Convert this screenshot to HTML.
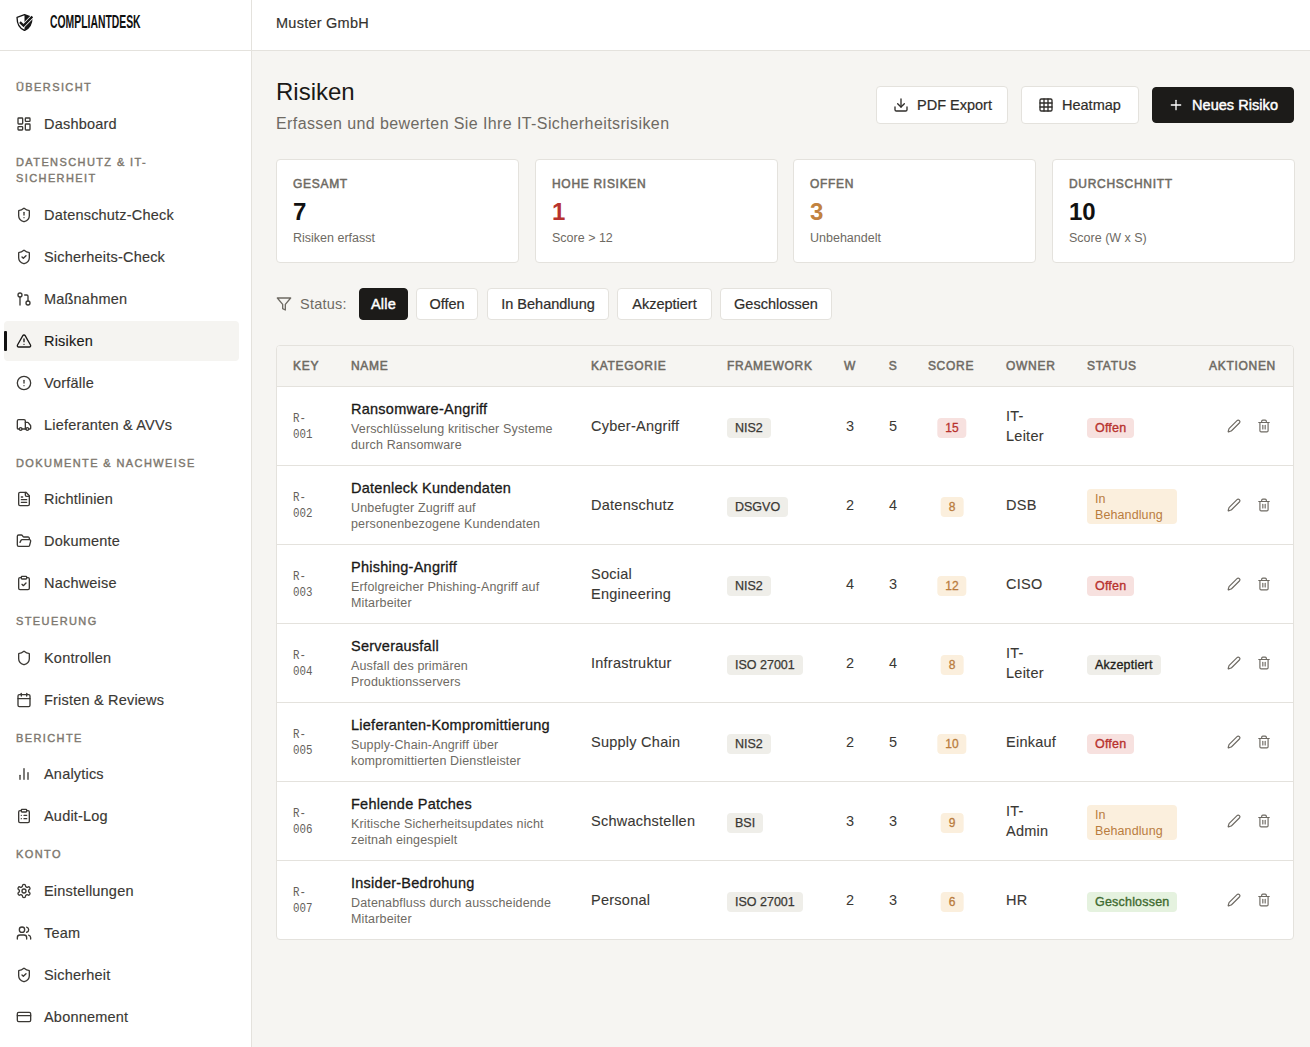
<!DOCTYPE html>
<html><head><meta charset="utf-8">
<style>
*{box-sizing:border-box;margin:0;padding:0}
html,body{width:1310px;height:1047px;overflow:hidden;background:#f6f5f2;font-family:"Liberation Sans",sans-serif;color:#1d1c1a}
svg{display:block}
.side{position:absolute;left:0;top:0;width:252px;height:1047px;background:#fff;border-right:1px solid #e4e2dd}
.logo{position:absolute;left:0;top:0;width:251px;height:51px;border-bottom:1px solid #e4e2dd}
.logo svg{position:absolute;left:16px;top:14px}
.logo .brand{position:absolute;left:50px;top:12px;font-weight:bold;font-size:18px;letter-spacing:0;transform-origin:0 0;transform:scaleX(0.577);color:#111}
.sec{position:absolute;left:16px;font-size:11px;letter-spacing:1.4px;color:#7d776e;font-weight:normal;-webkit-text-stroke:0.4px currentColor;line-height:16px;text-transform:uppercase}
.nav{position:absolute;left:4px;width:235px;height:40px;border-radius:4px;font-size:14.5px;color:#3a3834;-webkit-text-stroke:0.15px currentColor}
.nav svg{position:absolute;left:12px;top:12px}
.nav span{position:absolute;left:40px;top:11px;line-height:18px;letter-spacing:0.2px;white-space:nowrap}
.nav.act{background:#f5f4f1;color:#1a1917}
.nav.act:before{content:"";position:absolute;left:0;top:10px;width:3px;height:20px;background:#111;border-radius:1px}
.top{position:absolute;left:252px;top:0;width:1058px;height:51px;background:#fff;border-bottom:1px solid #e4e2dd}
.top span{position:absolute;left:24px;top:15px;font-size:14.5px;color:#34322e;letter-spacing:0.25px;-webkit-text-stroke:0.15px currentColor}
.main{position:absolute;left:0;top:0;width:1310px;height:1047px}
.ttl{position:absolute;left:276px;top:78px;font-size:24px;line-height:28px;color:#1a1917}
.sub{position:absolute;left:276px;top:114px;font-size:16px;letter-spacing:0.4px;line-height:20px;color:#6e6a63}
.btn{position:absolute;top:86px;height:38px;background:#fff;border:1px solid #e4e2dd;border-radius:4px;font-size:14.5px;-webkit-text-stroke:0.2px currentColor;color:#2f2d2a}
.btn svg{position:absolute;left:16px;top:10px}
.btn span{position:absolute;left:40px;top:9px;line-height:18px}
.btn.dark{top:87px;height:36px;background:#1c1b19;border-color:#1c1b19;color:#fff;-webkit-text-stroke:0.45px #fff;letter-spacing:0.05px}
.btn.dark span{left:39px;top:8px}.btn.dark svg{left:15px;top:9px}
.card{position:absolute;top:159px;width:243px;height:104px;background:#fff;border:1px solid #e4e2dd;border-radius:4px}
.cl{position:absolute;left:16px;top:16px;font-size:12px;line-height:16px;font-weight:normal;-webkit-text-stroke:0.5px currentColor;letter-spacing:0.7px;color:#6e6a63;text-transform:uppercase}
.cv{position:absolute;left:16px;top:38px;font-size:24px;line-height:28px;font-weight:bold;color:#111}
.cv.red{color:#b8322e}.cv.orange{color:#c2823f}
.cs{position:absolute;left:16px;top:70px;font-size:12.5px;line-height:16px;color:#6e6a63}
.flt{position:absolute;left:276px;top:288px;height:32px;font-size:14.5px;color:#6e6a63}
.flt svg{position:absolute;left:0;top:8px}
.flt span{position:absolute;left:24px;top:7px;line-height:18px;white-space:nowrap;letter-spacing:0.25px}
.fb{position:absolute;top:288px;height:32px;background:#fff;border:1px solid #e4e2dd;border-radius:4px;font-size:14.5px;-webkit-text-stroke:0.2px currentColor;line-height:30px;text-align:center;color:#2f2d2a;white-space:nowrap}
.fb.on{background:#1c1b19;border-color:#1c1b19;color:#fff;-webkit-text-stroke:0.45px #fff;letter-spacing:0.2px}
.tbl{position:absolute;left:276px;top:345px;width:1018px;height:595px;background:#fff;border:1px solid #e4e2dd;border-radius:4px;overflow:hidden}
.th{position:absolute;left:0;top:0;width:1016px;height:40px;background:#f6f5f2}
.h{position:absolute;top:12px;font-size:12px;line-height:16px;font-weight:normal;-webkit-text-stroke:0.5px currentColor;letter-spacing:0.7px;color:#6e6a63;text-transform:uppercase;white-space:nowrap}
.h.c{width:100px;text-align:center}
.h.r{width:100px;text-align:right}
.tr{position:absolute;left:0;width:1016px;height:79px;border-top:1px solid #e4e2dd}
.k{position:absolute;left:16px;top:24px;font-family:"Liberation Mono",monospace;font-size:12px;line-height:16px;color:#64605a;transform-origin:0 0;transform:scaleX(0.9)}
.nm{position:absolute;left:74px;top:12px;width:230px}
.nm b{display:block;font-size:14.5px;line-height:20px;font-weight:normal;-webkit-text-stroke:0.3px #1a1917;letter-spacing:0.25px;color:#1a1917}
.nm i{display:block;margin-top:2px;font-style:normal;font-size:12.5px;letter-spacing:0.15px;line-height:16px;color:#6e6a63}
.cat{position:absolute;left:314px;top:29px;font-size:14.5px;line-height:20px;color:#3a3834;letter-spacing:0.25px;-webkit-text-stroke:0.1px currentColor}
.cat.two{top:19px}
.fw{position:absolute;left:450px;top:31px;height:20px;padding:0 8px;background:#efeee9;border-radius:4px;font-size:12.5px;line-height:20px;-webkit-text-stroke:0.25px currentColor;letter-spacing:0;color:#3a3834}
.num{position:absolute;top:29px;width:40px;text-align:center;font-size:14.5px;line-height:20px;color:#3a3834}
.sc{position:absolute;left:675px;top:31px;height:20px;padding:0 8px;border-radius:4px;font-size:12px;line-height:20px;-webkit-text-stroke:0.3px currentColor;transform:translateX(-50%)}
.bred{background:#f7e1df;color:#b8322e}
.borg{background:#fbefdd;color:#b97c3d}
.bgry{background:#efeee9;color:#1f1e1b}
.bgrn{background:#e5f2df;color:#3f6b30}
.own{position:absolute;left:729px;top:29px;font-size:14.5px;line-height:20px;color:#3a3834;letter-spacing:0.25px;-webkit-text-stroke:0.1px currentColor}
.own.two{top:19px}
.st{position:absolute;left:810px;top:31px;height:20px;padding:0 8px;border-radius:4px;font-size:12.5px;line-height:20px;-webkit-text-stroke:0.35px currentColor;letter-spacing:0.2px}
.st.two{top:23px;height:35px;width:90px;line-height:16px;padding-top:2px;font-weight:normal;-webkit-text-stroke:0;letter-spacing:0.1px}
.acts{position:absolute;left:950px;top:32px;width:50px;height:14px}
.acts svg{position:absolute;top:0;color:#6e6a63}
.acts svg:first-child{left:0}
.acts svg:last-child{left:30px}
</style></head><body>
<div class="side">
  <div class="logo">
    <svg width="17" height="17" viewBox="0 0 16 16"><path d="M8 0.7 L15 3.1 C15.1 9 12.8 13.4 8 15.5 C3.2 13.4 0.9 9 1 3.1 Z" fill="#fff" stroke="#161616" stroke-width="1.25" stroke-linejoin="round"/><path d="M8 0.7 L15 3.1 C15.1 9 12.8 13.4 8 15.5 Z" fill="#161616"/><path d="M3.7 7.6 L7.1 10.9 L15.4 2.4" stroke="#fff" stroke-width="3.6" fill="none"/><path d="M3.7 7.6 L7.1 10.9 L15.4 2.4" stroke="#161616" stroke-width="2.1" fill="none"/></svg>
    <div class="brand">COMPLIANTDESK</div>
  </div>
<div class="sec" style="top:79px">Übersicht</div>
<div class="nav" style="top:104px"><svg width="16" height="16" viewBox="0 0 24 24" fill="none" stroke="currentColor" stroke-width="2" stroke-linecap="round" stroke-linejoin="round"><rect width="7" height="9" x="3" y="3" rx="1"/><rect width="7" height="5" x="14" y="3" rx="1"/><rect width="7" height="9" x="14" y="12" rx="1"/><rect width="7" height="5" x="3" y="16" rx="1"/></svg><span>Dashboard</span></div>
<div class="sec" style="top:154px">Datenschutz &amp; IT-<br>Sicherheit</div>
<div class="nav" style="top:195px"><svg width="16" height="16" viewBox="0 0 24 24" fill="none" stroke="currentColor" stroke-width="2" stroke-linecap="round" stroke-linejoin="round"><path d="M20 13c0 5-3.5 7.5-7.66 8.95a1 1 0 0 1-.67-.01C7.5 20.5 4 18 4 13V6a1 1 0 0 1 1-1c2 0 4.5-1.2 6.24-2.72a1.17 1.17 0 0 1 1.52 0C14.51 3.81 17 5 19 5a1 1 0 0 1 1 1z"/><path d="M12 8v4"/><path d="M12 16h.01"/></svg><span>Datenschutz-Check</span></div>
<div class="nav" style="top:237px"><svg width="16" height="16" viewBox="0 0 24 24" fill="none" stroke="currentColor" stroke-width="2" stroke-linecap="round" stroke-linejoin="round"><path d="M20 13c0 5-3.5 7.5-7.66 8.95a1 1 0 0 1-.67-.01C7.5 20.5 4 18 4 13V6a1 1 0 0 1 1-1c2 0 4.5-1.2 6.24-2.72a1.17 1.17 0 0 1 1.52 0C14.51 3.81 17 5 19 5a1 1 0 0 1 1 1z"/><path d="m9 12 2 2 4-4"/></svg><span>Sicherheits-Check</span></div>
<div class="nav" style="top:279px"><svg width="16" height="16" viewBox="0 0 24 24" fill="none" stroke="currentColor" stroke-width="2" stroke-linecap="round" stroke-linejoin="round"><circle cx="18" cy="18" r="3"/><circle cx="6" cy="6" r="3"/><path d="M13 6h3a2 2 0 0 1 2 2v7"/><line x1="6" x2="6" y1="9" y2="21"/></svg><span>Maßnahmen</span></div>
<div class="nav act" style="top:321px"><svg width="16" height="16" viewBox="0 0 24 24" fill="none" stroke="currentColor" stroke-width="2" stroke-linecap="round" stroke-linejoin="round"><path d="m21.73 18-8-14a2 2 0 0 0-3.48 0l-8 14A2 2 0 0 0 4 21h16a2 2 0 0 0 1.73-3"/><path d="M12 9v4"/><path d="M12 17h.01"/></svg><span>Risiken</span></div>
<div class="nav" style="top:363px"><svg width="16" height="16" viewBox="0 0 24 24" fill="none" stroke="currentColor" stroke-width="2" stroke-linecap="round" stroke-linejoin="round"><circle cx="12" cy="12" r="10"/><line x1="12" x2="12" y1="8" y2="12"/><line x1="12" x2="12.01" y1="16" y2="16"/></svg><span>Vorfälle</span></div>
<div class="nav" style="top:405px"><svg width="16" height="16" viewBox="0 0 24 24" fill="none" stroke="currentColor" stroke-width="2" stroke-linecap="round" stroke-linejoin="round"><path d="M14 18V6a2 2 0 0 0-2-2H4a2 2 0 0 0-2 2v11a1 1 0 0 0 1 1h2"/><path d="M15 18H9"/><path d="M19 18h2a1 1 0 0 0 1-1v-3.65a1 1 0 0 0-.22-.624l-3.48-4.35A1 1 0 0 0 17.52 8H14"/><circle cx="17" cy="18" r="2"/><circle cx="7" cy="18" r="2"/></svg><span>Lieferanten &amp; AVVs</span></div>
<div class="sec" style="top:455px">Dokumente &amp; Nachweise</div>
<div class="nav" style="top:479px"><svg width="16" height="16" viewBox="0 0 24 24" fill="none" stroke="currentColor" stroke-width="2" stroke-linecap="round" stroke-linejoin="round"><path d="M15 2H6a2 2 0 0 0-2 2v16a2 2 0 0 0 2 2h12a2 2 0 0 0 2-2V7Z"/><path d="M14 2v4a2 2 0 0 0 2 2h4"/><path d="M10 9H8"/><path d="M16 13H8"/><path d="M16 17H8"/></svg><span>Richtlinien</span></div>
<div class="nav" style="top:521px"><svg width="16" height="16" viewBox="0 0 24 24" fill="none" stroke="currentColor" stroke-width="2" stroke-linecap="round" stroke-linejoin="round"><path d="m6 14 1.5-2.9A2 2 0 0 1 9.24 10H20a2 2 0 0 1 1.94 2.5l-1.54 6a2 2 0 0 1-1.95 1.5H4a2 2 0 0 1-2-2V5a2 2 0 0 1 2-2h3.9a2 2 0 0 1 1.69.9l.81 1.2a2 2 0 0 0 1.67.9H18a2 2 0 0 1 2 2v2"/></svg><span>Dokumente</span></div>
<div class="nav" style="top:563px"><svg width="16" height="16" viewBox="0 0 24 24" fill="none" stroke="currentColor" stroke-width="2" stroke-linecap="round" stroke-linejoin="round"><rect width="8" height="4" x="8" y="2" rx="1" ry="1"/><path d="M16 4h2a2 2 0 0 1 2 2v14a2 2 0 0 1-2 2H6a2 2 0 0 1-2-2V6a2 2 0 0 1 2-2h2"/><path d="m9 14 2 2 4-4"/></svg><span>Nachweise</span></div>
<div class="sec" style="top:613px">Steuerung</div>
<div class="nav" style="top:638px"><svg width="16" height="16" viewBox="0 0 24 24" fill="none" stroke="currentColor" stroke-width="2" stroke-linecap="round" stroke-linejoin="round"><path d="M20 13c0 5-3.5 7.5-7.66 8.95a1 1 0 0 1-.67-.01C7.5 20.5 4 18 4 13V6a1 1 0 0 1 1-1c2 0 4.5-1.2 6.24-2.72a1.17 1.17 0 0 1 1.52 0C14.51 3.81 17 5 19 5a1 1 0 0 1 1 1z"/></svg><span>Kontrollen</span></div>
<div class="nav" style="top:680px"><svg width="16" height="16" viewBox="0 0 24 24" fill="none" stroke="currentColor" stroke-width="2" stroke-linecap="round" stroke-linejoin="round"><path d="M8 2v4"/><path d="M16 2v4"/><rect width="18" height="18" x="3" y="4" rx="2"/><path d="M3 10h18"/></svg><span>Fristen &amp; Reviews</span></div>
<div class="sec" style="top:730px">Berichte</div>
<div class="nav" style="top:754px"><svg width="16" height="16" viewBox="0 0 24 24" fill="none" stroke="currentColor" stroke-width="2" stroke-linecap="round" stroke-linejoin="round"><line x1="18" x2="18" y1="20" y2="10"/><line x1="12" x2="12" y1="20" y2="4"/><line x1="6" x2="6" y1="20" y2="14"/></svg><span>Analytics</span></div>
<div class="nav" style="top:796px"><svg width="16" height="16" viewBox="0 0 24 24" fill="none" stroke="currentColor" stroke-width="2" stroke-linecap="round" stroke-linejoin="round"><rect width="8" height="4" x="8" y="2" rx="1" ry="1"/><path d="M16 4h2a2 2 0 0 1 2 2v14a2 2 0 0 1-2 2H6a2 2 0 0 1-2-2V6a2 2 0 0 1 2-2h2"/><path d="M12 11h4"/><path d="M12 16h4"/><path d="M8 11h.01"/><path d="M8 16h.01"/></svg><span>Audit-Log</span></div>
<div class="sec" style="top:846px">Konto</div>
<div class="nav" style="top:871px"><svg width="16" height="16" viewBox="0 0 24 24" fill="none" stroke="currentColor" stroke-width="2" stroke-linecap="round" stroke-linejoin="round"><path d="M12.22 2h-.44a2 2 0 0 0-2 2v.18a2 2 0 0 1-1 1.73l-.43.25a2 2 0 0 1-2 0l-.15-.08a2 2 0 0 0-2.73.73l-.22.38a2 2 0 0 0 .73 2.73l.15.1a2 2 0 0 1 1 1.72v.51a2 2 0 0 1-1 1.74l-.15.09a2 2 0 0 0-.73 2.73l.22.38a2 2 0 0 0 2.730.73l.15-.08a2 2 0 0 1 2 0l.43.25a2 2 0 0 1 1 1.73V20a2 2 0 0 0 2 2h.44a2 2 0 0 0 2-2v-.18a2 2 0 0 1 1-1.73l.43-.25a2 2 0 0 1 2 0l.15.08a2 2 0 0 0 2.73-.73l.22-.39a2 2 0 0 0-.73-2.73l-.15-.08a2 2 0 0 1-1-1.74v-.5a2 2 0 0 1 1-1.74l.15-.09a2 2 0 0 0 .73-2.73l-.22-.38a2 2 0 0 0-2.73-.73l-.15.08a2 2 0 0 1-2 0l-.43-.25a2 2 0 0 1-1-1.73V4a2 2 0 0 0-2-2z"/><circle cx="12" cy="12" r="3"/></svg><span>Einstellungen</span></div>
<div class="nav" style="top:913px"><svg width="16" height="16" viewBox="0 0 24 24" fill="none" stroke="currentColor" stroke-width="2" stroke-linecap="round" stroke-linejoin="round"><path d="M16 21v-2a4 4 0 0 0-4-4H6a4 4 0 0 0-4 4v2"/><circle cx="9" cy="7" r="4"/><path d="M22 21v-2a4 4 0 0 0-3-3.870"/><path d="M16 3.13a4 4 0 0 1 0 7.75"/></svg><span>Team</span></div>
<div class="nav" style="top:955px"><svg width="16" height="16" viewBox="0 0 24 24" fill="none" stroke="currentColor" stroke-width="2" stroke-linecap="round" stroke-linejoin="round"><path d="M20 13c0 5-3.5 7.5-7.66 8.95a1 1 0 0 1-.67-.01C7.5 20.5 4 18 4 13V6a1 1 0 0 1 1-1c2 0 4.5-1.2 6.24-2.72a1.17 1.17 0 0 1 1.52 0C14.51 3.81 17 5 19 5a1 1 0 0 1 1 1z"/><path d="m9 12 2 2 4-4"/></svg><span>Sicherheit</span></div>
<div class="nav" style="top:997px"><svg width="16" height="16" viewBox="0 0 24 24" fill="none" stroke="currentColor" stroke-width="2" stroke-linecap="round" stroke-linejoin="round"><rect width="20" height="14" x="2" y="5" rx="2"/><line x1="2" x2="22" y1="10" y2="10"/></svg><span>Abonnement</span></div>
</div>
<div class="top"><span>Muster GmbH</span></div>
<div class="main">
<div class="ttl">Risiken</div>
<div class="sub">Erfassen und bewerten Sie Ihre IT-Sicherheitsrisiken</div>
<div class="btn" style="left:876px;width:132px"><svg width="16" height="16" viewBox="0 0 24 24" fill="none" stroke="currentColor" stroke-width="2" stroke-linecap="round" stroke-linejoin="round" ><path d="M21 15v4a2 2 0 0 1-2 2H5a2 2 0 0 1-2-2v-4"/><polyline points="7 10 12 15 17 10"/><line x1="12" x2="12" y1="15" y2="3"/></svg><span>PDF Export</span></div>
<div class="btn" style="left:1021px;width:118px"><svg width="16" height="16" viewBox="0 0 24 24" fill="none" stroke="currentColor" stroke-width="2" stroke-linecap="round" stroke-linejoin="round" ><rect width="18" height="18" x="3" y="3" rx="2"/><path d="M3 9h18"/><path d="M3 15h18"/><path d="M9 3v18"/><path d="M15 3v18"/></svg><span>Heatmap</span></div>
<div class="btn dark" style="left:1152px;width:142px"><svg width="16" height="16" viewBox="0 0 24 24" fill="none" stroke="currentColor" stroke-width="2" stroke-linecap="round" stroke-linejoin="round" ><path d="M5 12h14"/><path d="M12 5v14"/></svg><span>Neues Risiko</span></div>
<div class="card" style="left:276px"><div class="cl">Gesamt</div><div class="cv ">7</div><div class="cs">Risiken erfasst</div></div>
<div class="card" style="left:535px"><div class="cl">Hohe Risiken</div><div class="cv red">1</div><div class="cs">Score &gt; 12</div></div>
<div class="card" style="left:793px"><div class="cl">Offen</div><div class="cv orange">3</div><div class="cs">Unbehandelt</div></div>
<div class="card" style="left:1052px"><div class="cl">Durchschnitt</div><div class="cv ">10</div><div class="cs">Score (W x S)</div></div>
<div class="flt"><svg width="16" height="16" viewBox="0 0 24 24" fill="none" stroke="currentColor" stroke-width="2" stroke-linecap="round" stroke-linejoin="round" ><polygon points="22 3 2 3 10 12.46 10 19 14 21 14 12.46 22 3"/></svg><span>Status:</span></div>
<div class="fb on" style="left:359px;width:49px">Alle</div>
<div class="fb" style="left:416px;width:62px">Offen</div>
<div class="fb" style="left:487px;width:122px">In Behandlung</div>
<div class="fb" style="left:617px;width:95px">Akzeptiert</div>
<div class="fb" style="left:720px;width:112px">Geschlossen</div>
<div class="tbl">
<div class="th">
<div class="h" style="left:16px">Key</div>
<div class="h" style="left:74px">Name</div>
<div class="h" style="left:314px">Kategorie</div>
<div class="h" style="left:450px">Framework</div>
<div class="h c" style="left:523px">W</div>
<div class="h c" style="left:566px">S</div>
<div class="h c" style="left:624px">Score</div>
<div class="h" style="left:729px">Owner</div>
<div class="h" style="left:810px">Status</div>
<div class="h r" style="left:899px">Aktionen</div>
</div>
<div class="tr" style="top:40px">
<div class="k">R-<br>001</div>
<div class="nm"><b>Ransomware-Angriff</b><i>Verschlüsselung kritischer Systeme<br>durch Ransomware</i></div>
<div class="cat">Cyber-Angriff</div>
<div class="fw">NIS2</div>
<div class="num" style="left:553px">3</div>
<div class="num" style="left:596px">5</div>
<div class="sc bred">15</div>
<div class="own two">IT-<br>Leiter</div>
<div class="st bred">Offen</div>
<div class="acts"><svg width="14" height="14" viewBox="0 0 24 24" fill="none" stroke="currentColor" stroke-width="2" stroke-linecap="round" stroke-linejoin="round" ><path d="M21.174 6.812a1 1 0 0 0-3.986-3.987L3.842 16.174a2 2 0 0 0-.5.83l-1.321 4.352a.5.5 0 0 0 .623.622l4.353-1.32a2 2 0 0 0 .83-.497z"/></svg><svg width="14" height="14" viewBox="0 0 24 24" fill="none" stroke="currentColor" stroke-width="2" stroke-linecap="round" stroke-linejoin="round" ><path d="M3 6h18"/><path d="M19 6v14c0 1-1 2-2 2H7c-1 0-2-1-2-2V6"/><path d="M8 6V4c0-1 1-2 2-2h4c1 0 2 1 2 2v2"/><line x1="10" x2="10" y1="11" y2="17"/><line x1="14" x2="14" y1="11" y2="17"/></svg></div>
</div>
<div class="tr" style="top:119px">
<div class="k">R-<br>002</div>
<div class="nm"><b>Datenleck Kundendaten</b><i>Unbefugter Zugriff auf<br>personenbezogene Kundendaten</i></div>
<div class="cat">Datenschutz</div>
<div class="fw">DSGVO</div>
<div class="num" style="left:553px">2</div>
<div class="num" style="left:596px">4</div>
<div class="sc borg">8</div>
<div class="own">DSB</div>
<div class="st borg two">In<br>Behandlung</div>
<div class="acts"><svg width="14" height="14" viewBox="0 0 24 24" fill="none" stroke="currentColor" stroke-width="2" stroke-linecap="round" stroke-linejoin="round" ><path d="M21.174 6.812a1 1 0 0 0-3.986-3.987L3.842 16.174a2 2 0 0 0-.5.83l-1.321 4.352a.5.5 0 0 0 .623.622l4.353-1.32a2 2 0 0 0 .83-.497z"/></svg><svg width="14" height="14" viewBox="0 0 24 24" fill="none" stroke="currentColor" stroke-width="2" stroke-linecap="round" stroke-linejoin="round" ><path d="M3 6h18"/><path d="M19 6v14c0 1-1 2-2 2H7c-1 0-2-1-2-2V6"/><path d="M8 6V4c0-1 1-2 2-2h4c1 0 2 1 2 2v2"/><line x1="10" x2="10" y1="11" y2="17"/><line x1="14" x2="14" y1="11" y2="17"/></svg></div>
</div>
<div class="tr" style="top:198px">
<div class="k">R-<br>003</div>
<div class="nm"><b>Phishing-Angriff</b><i>Erfolgreicher Phishing-Angriff auf<br>Mitarbeiter</i></div>
<div class="cat two">Social<br>Engineering</div>
<div class="fw">NIS2</div>
<div class="num" style="left:553px">4</div>
<div class="num" style="left:596px">3</div>
<div class="sc borg">12</div>
<div class="own">CISO</div>
<div class="st bred">Offen</div>
<div class="acts"><svg width="14" height="14" viewBox="0 0 24 24" fill="none" stroke="currentColor" stroke-width="2" stroke-linecap="round" stroke-linejoin="round" ><path d="M21.174 6.812a1 1 0 0 0-3.986-3.987L3.842 16.174a2 2 0 0 0-.5.83l-1.321 4.352a.5.5 0 0 0 .623.622l4.353-1.32a2 2 0 0 0 .83-.497z"/></svg><svg width="14" height="14" viewBox="0 0 24 24" fill="none" stroke="currentColor" stroke-width="2" stroke-linecap="round" stroke-linejoin="round" ><path d="M3 6h18"/><path d="M19 6v14c0 1-1 2-2 2H7c-1 0-2-1-2-2V6"/><path d="M8 6V4c0-1 1-2 2-2h4c1 0 2 1 2 2v2"/><line x1="10" x2="10" y1="11" y2="17"/><line x1="14" x2="14" y1="11" y2="17"/></svg></div>
</div>
<div class="tr" style="top:277px">
<div class="k">R-<br>004</div>
<div class="nm"><b>Serverausfall</b><i>Ausfall des primären<br>Produktionsservers</i></div>
<div class="cat">Infrastruktur</div>
<div class="fw">ISO 27001</div>
<div class="num" style="left:553px">2</div>
<div class="num" style="left:596px">4</div>
<div class="sc borg">8</div>
<div class="own two">IT-<br>Leiter</div>
<div class="st bgry">Akzeptiert</div>
<div class="acts"><svg width="14" height="14" viewBox="0 0 24 24" fill="none" stroke="currentColor" stroke-width="2" stroke-linecap="round" stroke-linejoin="round" ><path d="M21.174 6.812a1 1 0 0 0-3.986-3.987L3.842 16.174a2 2 0 0 0-.5.83l-1.321 4.352a.5.5 0 0 0 .623.622l4.353-1.32a2 2 0 0 0 .83-.497z"/></svg><svg width="14" height="14" viewBox="0 0 24 24" fill="none" stroke="currentColor" stroke-width="2" stroke-linecap="round" stroke-linejoin="round" ><path d="M3 6h18"/><path d="M19 6v14c0 1-1 2-2 2H7c-1 0-2-1-2-2V6"/><path d="M8 6V4c0-1 1-2 2-2h4c1 0 2 1 2 2v2"/><line x1="10" x2="10" y1="11" y2="17"/><line x1="14" x2="14" y1="11" y2="17"/></svg></div>
</div>
<div class="tr" style="top:356px">
<div class="k">R-<br>005</div>
<div class="nm"><b>Lieferanten-Kompromittierung</b><i>Supply-Chain-Angriff über<br>kompromittierten Dienstleister</i></div>
<div class="cat">Supply Chain</div>
<div class="fw">NIS2</div>
<div class="num" style="left:553px">2</div>
<div class="num" style="left:596px">5</div>
<div class="sc borg">10</div>
<div class="own">Einkauf</div>
<div class="st bred">Offen</div>
<div class="acts"><svg width="14" height="14" viewBox="0 0 24 24" fill="none" stroke="currentColor" stroke-width="2" stroke-linecap="round" stroke-linejoin="round" ><path d="M21.174 6.812a1 1 0 0 0-3.986-3.987L3.842 16.174a2 2 0 0 0-.5.83l-1.321 4.352a.5.5 0 0 0 .623.622l4.353-1.32a2 2 0 0 0 .83-.497z"/></svg><svg width="14" height="14" viewBox="0 0 24 24" fill="none" stroke="currentColor" stroke-width="2" stroke-linecap="round" stroke-linejoin="round" ><path d="M3 6h18"/><path d="M19 6v14c0 1-1 2-2 2H7c-1 0-2-1-2-2V6"/><path d="M8 6V4c0-1 1-2 2-2h4c1 0 2 1 2 2v2"/><line x1="10" x2="10" y1="11" y2="17"/><line x1="14" x2="14" y1="11" y2="17"/></svg></div>
</div>
<div class="tr" style="top:435px">
<div class="k">R-<br>006</div>
<div class="nm"><b>Fehlende Patches</b><i>Kritische Sicherheitsupdates nicht<br>zeitnah eingespielt</i></div>
<div class="cat">Schwachstellen</div>
<div class="fw">BSI</div>
<div class="num" style="left:553px">3</div>
<div class="num" style="left:596px">3</div>
<div class="sc borg">9</div>
<div class="own two">IT-<br>Admin</div>
<div class="st borg two">In<br>Behandlung</div>
<div class="acts"><svg width="14" height="14" viewBox="0 0 24 24" fill="none" stroke="currentColor" stroke-width="2" stroke-linecap="round" stroke-linejoin="round" ><path d="M21.174 6.812a1 1 0 0 0-3.986-3.987L3.842 16.174a2 2 0 0 0-.5.83l-1.321 4.352a.5.5 0 0 0 .623.622l4.353-1.32a2 2 0 0 0 .83-.497z"/></svg><svg width="14" height="14" viewBox="0 0 24 24" fill="none" stroke="currentColor" stroke-width="2" stroke-linecap="round" stroke-linejoin="round" ><path d="M3 6h18"/><path d="M19 6v14c0 1-1 2-2 2H7c-1 0-2-1-2-2V6"/><path d="M8 6V4c0-1 1-2 2-2h4c1 0 2 1 2 2v2"/><line x1="10" x2="10" y1="11" y2="17"/><line x1="14" x2="14" y1="11" y2="17"/></svg></div>
</div>
<div class="tr" style="top:514px">
<div class="k">R-<br>007</div>
<div class="nm"><b>Insider-Bedrohung</b><i>Datenabfluss durch ausscheidende<br>Mitarbeiter</i></div>
<div class="cat">Personal</div>
<div class="fw">ISO 27001</div>
<div class="num" style="left:553px">2</div>
<div class="num" style="left:596px">3</div>
<div class="sc borg">6</div>
<div class="own">HR</div>
<div class="st bgrn">Geschlossen</div>
<div class="acts"><svg width="14" height="14" viewBox="0 0 24 24" fill="none" stroke="currentColor" stroke-width="2" stroke-linecap="round" stroke-linejoin="round" ><path d="M21.174 6.812a1 1 0 0 0-3.986-3.987L3.842 16.174a2 2 0 0 0-.5.83l-1.321 4.352a.5.5 0 0 0 .623.622l4.353-1.32a2 2 0 0 0 .83-.497z"/></svg><svg width="14" height="14" viewBox="0 0 24 24" fill="none" stroke="currentColor" stroke-width="2" stroke-linecap="round" stroke-linejoin="round" ><path d="M3 6h18"/><path d="M19 6v14c0 1-1 2-2 2H7c-1 0-2-1-2-2V6"/><path d="M8 6V4c0-1 1-2 2-2h4c1 0 2 1 2 2v2"/><line x1="10" x2="10" y1="11" y2="17"/><line x1="14" x2="14" y1="11" y2="17"/></svg></div>
</div>
</div>
</div>
</body></html>
